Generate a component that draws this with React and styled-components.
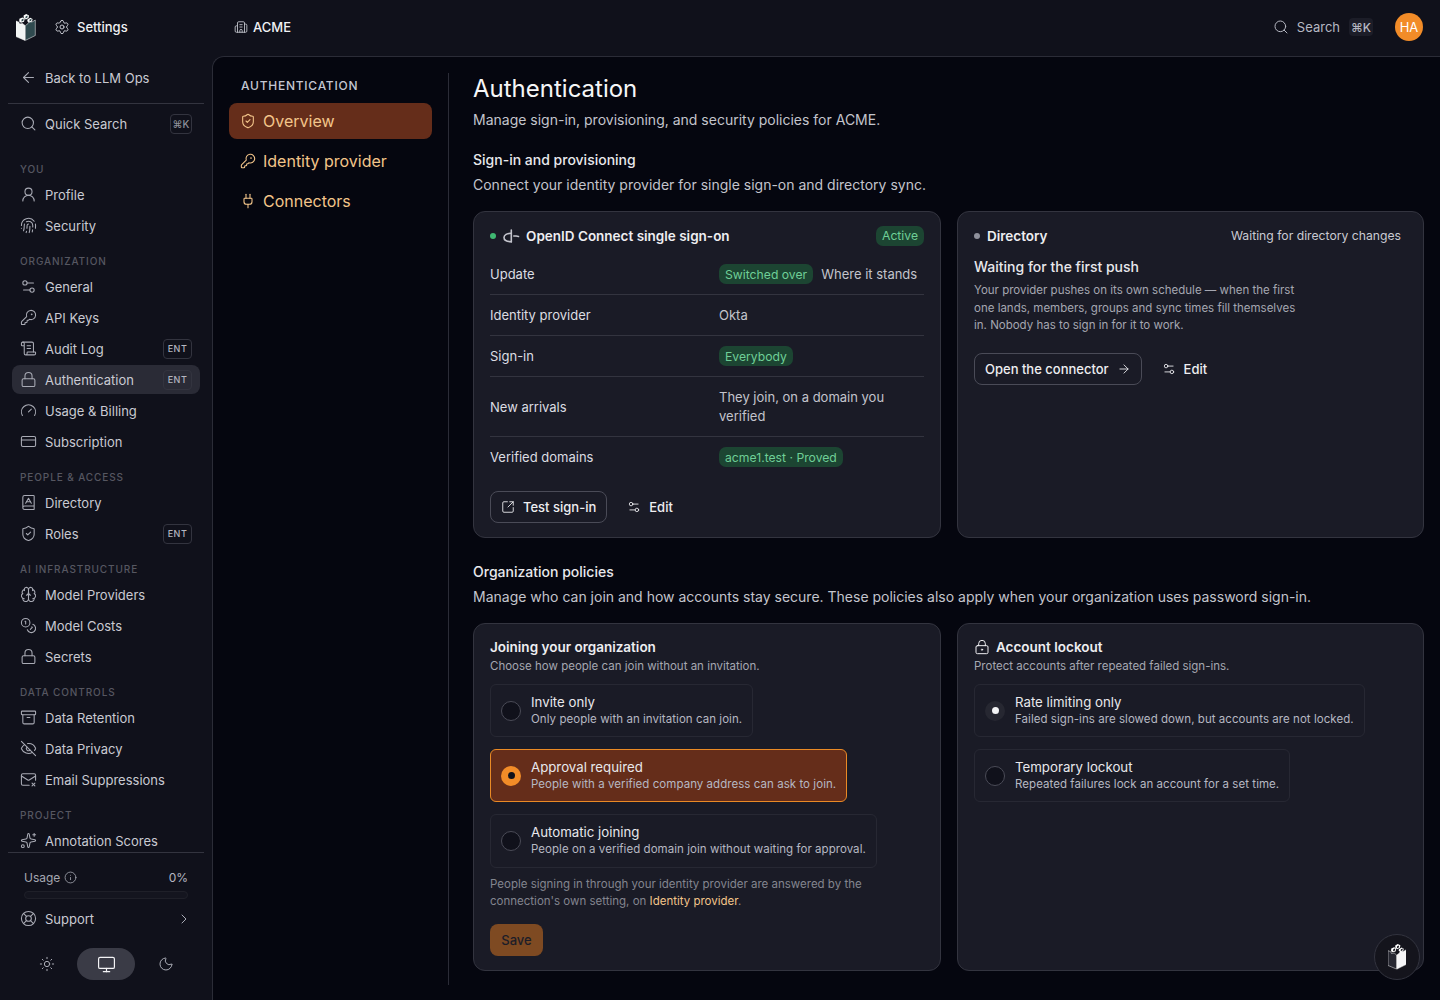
import React from 'react';
import styled, { createGlobalStyle } from 'styled-components';
import {
  Archive, ArrowLeft, ArrowRight, BookA, Brain, Building2, ChevronRight, Coins, CreditCard, EyeOff,
  Fingerprint, Gauge, Info, KeyRound, LifeBuoy, Lock, LockKeyhole, MailX, Monitor, Moon, Plug,
  ScrollText, Search, Settings, Settings2, ShieldCheck, Sparkles, SquareArrowOutUpRight, Sun, UserRound,
} from 'lucide-react';

const GlobalStyle = createGlobalStyle`
  html, body {
    margin: 0;
    height: 100%;
    background: #10111b;
    color: #f4f4f6;
    font-family: Inter, "Noto Sans", sans-serif;
    font-size: 14px;
    overflow: hidden;
  }
  * { box-sizing: border-box; }
`;

const Page = styled.div`
  display: flex;
  flex-direction: column;
  height: 100vh;
`;

const TopBar = styled.header`
  display: flex;
  align-items: center;
  height: 56px;
  flex: none;
  padding: 0 17px 2px 16px;
`;

const LogoSlot = styled.span`
  display: flex;
  width: 38px;
  flex: none;
`;

const TopTitle = styled.span`
  display: flex;
  align-items: center;
  gap: 7px;
  width: 180px;
  flex: none;
  font-size: 13px;
  font-weight: 500;
  color: #f1f1f4;
  svg { color: #c4c6ce; }
`;

const Org = styled(TopTitle)`
  gap: 5px;
  flex: 1;
`;

const TopSearch = styled.span`
  display: flex;
  align-items: center;
  gap: 8px;
  font-size: 13px;
  color: #b6b8c2;
  margin-right: 22px;
`;

const TopKbd = styled.kbd`
  display: flex;
  align-items: center;
  justify-content: center;
  width: 24px;
  height: 18px;
  margin-left: 1px;
  border-radius: 4px;
  background: #1c1d28;
  color: #b6b8c2;
  font: 500 12px Inter, sans-serif;
`;

const Avatar = styled.span`
  display: flex;
  align-items: center;
  justify-content: center;
  width: 28px;
  height: 28px;
  border-radius: 50%;
  background: #f28c28;
  color: #fff;
  font-size: 13px;
  font-weight: 400;
`;

const Body = styled.div`
  display: flex;
  flex: 1;
  min-height: 0;
`;

const Sidebar = styled.aside`
  display: flex;
  flex-direction: column;
  width: 212px;
  flex: none;
  min-height: 0;
`;

const BackArea = styled.div`
  margin: 0 8px;
  padding: 7px 4px 11px;
  border-bottom: 1px solid #33343f;
`;

const NavScroll = styled.nav`
  display: flex;
  flex-direction: column;
  flex: 1;
  min-height: 0;
  overflow: hidden;
  padding: 5px 12px 0;
`;

const NavItem = styled.a`
  display: flex;
  align-items: center;
  gap: 8px;
  height: 29px;
  flex: none;
  padding: 0 8px;
  border-radius: 8px;
  font-size: 13px;
  color: #c9cad2;
  background: ${(p) => (p.$active ? '#2a2b36' : 'transparent')};
  svg { color: #a9abb5; flex: none; }
`;

const ItemLabel = styled.span`
  flex: 1;
  white-space: nowrap;
`;

const QuickKbd = styled.kbd`
  display: flex;
  align-items: center;
  justify-content: center;
  width: 22px;
  height: 20px;
  border: 1px solid #33343f;
  border-radius: 4px;
  color: #8f919c;
  font: 500 10px Inter, sans-serif;
`;

const EntBadge = styled.span`
  display: flex;
  align-items: center;
  justify-content: center;
  width: 29px;
  height: 20px;
  border: 1px solid #33343f;
  border-radius: 4px;
  color: #b4b6c0;
  font-size: 9px;
  font-weight: 500;
  letter-spacing: 0.5px;
`;

const NavGroups = styled.div`
  display: flex;
  flex-direction: column;
  gap: 15px;
  margin-top: 25px;
`;

const NavGroup = styled.div`
  display: flex;
  flex-direction: column;
  gap: 2px;
`;

const GroupLabel = styled.div`
  height: 13px;
  margin-bottom: 2px;
  padding-left: 8px;
  font-size: 10px;
  line-height: 13px;
  font-weight: 500;
  letter-spacing: 0.9px;
  color: #565761;
`;

const SideFoot = styled.div`
  flex: none;
  margin: 0 8px;
  padding: 15px 4px 20px;
  border-top: 1px solid #33343f;
`;

const UsageRow = styled.div`
  display: flex;
  align-items: center;
  gap: 4px;
  padding: 0 12px;
  height: 18px;
  font-size: 12px;
  color: #a5a7b1;
  svg { color: #a5a7b1; }
`;

const UsagePct = styled.span`
  margin-left: auto;
  color: #b6b8c2;
`;

const UsageTrack = styled.div`
  height: 8px;
  margin: 5px 12px 5px;
  border: 1px solid #1f2029;
  border-radius: 4px;
  background: #14151f;
`;

const ThemeSwitch = styled.div`
  display: grid;
  grid-template-columns: 1fr 58px 1fr;
  align-items: center;
  justify-items: center;
  margin-top: 15px;
  padding: 0 4px;
`;

const ThemeOption = styled.span`
  display: flex;
  align-items: center;
  justify-content: center;
  width: 58px;
  height: 32px;
  border-radius: 16px;
  background: ${(p) => (p.$active ? '#3a3b46' : 'transparent')};
  color: ${(p) => (p.$active ? '#f4f4f6' : '#a9abb5')};
`;

const Main = styled.main`
  display: flex;
  flex: 1;
  min-width: 0;
  padding: 16px 16px 15px 0;
  background: #05060f;
  border-top: 1px solid #2b2c37;
  border-left: 1px solid #2b2c37;
  border-top-left-radius: 12px;
`;

const SubNav = styled.div`
  display: flex;
  flex-direction: column;
  gap: 4px;
  width: 236px;
  flex: none;
  padding: 0 16px;
  border-right: 1px solid #2b2c37;
`;

const SubHead = styled.div`
  height: 26px;
  padding: 5px 12px 0;
  font-size: 12px;
  font-weight: 500;
  letter-spacing: 0.75px;
  color: #c3c6d2;
`;

const SubItem = styled.a`
  display: flex;
  align-items: center;
  gap: 7px;
  height: 36px;
  padding: 0 11px;
  border-radius: 8px;
  font-size: 16px;
  color: #f3c58a;
  background: ${(p) => (p.$active ? '#652d1a' : 'transparent')};
`;

const Content = styled.div`
  flex: 1;
  min-width: 0;
  margin-left: 24px;
`;

const PageTitle = styled.h1`
  margin: 0;
  font-size: 24px;
  line-height: 32px;
  font-weight: 400;
  color: #f6f6f8;
`;

const Lead = styled.p`
  margin: 5px 0 0;
  font-size: 14px;
  line-height: 20px;
  color: #c3c4cc;
`;

const SectionTitle = styled.h2`
  margin: ${(p) => p.$top}px 0 0;
  font-size: 14px;
  line-height: 20px;
  font-weight: 500;
  color: #e8e8ec;
`;

const SectionText = styled(Lead)`
  margin-top: 5px;
`;

const CardGrid = styled.div`
  display: grid;
  grid-template-columns: 468px 467px;
  gap: 16px;
  margin-top: 16px;
  height: ${(p) => p.$h}px;
`;

const Card = styled.section`
  display: flex;
  flex-direction: column;
  align-items: flex-start;
  padding: 14px 16px;
  background: #1a1b26;
  border: 1px solid #33343f;
  border-radius: 12px;
`;

const CardHead = styled.div`
  display: flex;
  align-items: center;
  width: 100%;
  height: 20px;
  gap: 6px;
  font-size: 13.5px;
  font-weight: 600;
  color: #eeeef1;
`;

const Dot = styled.span`
  width: 6px;
  height: 6px;
  border-radius: 50%;
  margin-right: ${(p) => p.$gap}px;
  background: ${(p) => p.$color};
`;

const Pill = styled.span`
  display: inline-flex;
  align-items: center;
  height: 20px;
  padding: 0 6px;
  border-radius: 7px;
  background: #1c4532;
  color: #6fcf97;
  font-size: 12.2px;
  font-weight: 400;
  white-space: nowrap;
`;

const HeadPill = styled(Pill)`
  margin-left: auto;
  margin-top: -1px;
`;

const HeadNote = styled.span`
  margin-left: auto;
  margin-right: 6px;
  margin-top: -1px;
  font-size: 12.2px;
  font-weight: 400;
  color: #c9cad2;
`;

const Rows = styled.div`
  width: 100%;
  margin-top: 8px;
`;

const Row = styled.div`
  display: grid;
  grid-template-columns: 229px 1fr;
  align-items: center;
  min-height: ${(p) => (p.$tall ? 60 : 41)}px;
  padding: 10px 0;
  border-bottom: 1px solid ${(p) => (p.$last ? 'transparent' : '#33343f')};
`;

const RowLabel = styled.span`
  color: #dcdde2;
  font-size: 13px;
`;

const RowValue = styled.span`
  display: flex;
  align-items: center;
  gap: 8px;
  font-size: 13px;
  line-height: 19px;
  color: #c3c4cc;
`;

const Actions = styled.div`
  display: flex;
  align-items: center;
  gap: 4px;
  margin-top: ${(p) => p.$top}px;
`;

const OutlineButton = styled.button`
  display: flex;
  align-items: center;
  gap: 8px;
  height: 32px;
  padding: 0 10px;
  border: 1px solid #4a4b57;
  border-radius: 8px;
  background: transparent;
  color: #eeeef1;
  font: 500 13px Inter, sans-serif;
`;

const GhostButton = styled(OutlineButton)`
  border-color: transparent;
  padding: 0 10px 0 15px;
`;

const SubTitle = styled.div`
  margin-top: 11px;
  font-size: 14px;
  line-height: 20px;
  font-weight: 500;
  color: #e8e8ec;
`;

const Para = styled.p`
  width: 325px;
  margin: 5px 0 0;
  font-size: 11.5px;
  line-height: 17.5px;
  color: #a5a7b1;
`;

const CardTitle = styled.div`
  display: flex;
  align-items: center;
  gap: 6px;
  font-size: 13.5px;
  line-height: 18px;
  font-weight: 600;
  color: #eeeef1;
`;

const CardHint = styled.div`
  margin-top: 2px;
  font-size: 11.5px;
  line-height: 16px;
  color: #a5a7b1;
`;

const Options = styled.div`
  display: flex;
  flex-direction: column;
  align-items: flex-start;
  gap: 12px;
  margin-top: 10px;
`;

const Option = styled.div`
  display: flex;
  align-items: center;
  gap: 10px;
  min-height: ${(p) => (p.$tall ? 54 : 53)}px;
  padding: 0 10px;
  border: 1px solid ${(p) => (p.$on ? '#ea8a25' : '#272833')};
  border-radius: 6px;
  background: ${(p) => (p.$on ? '#652d1a' : 'transparent')};
`;

const Radio = styled.span`
  display: flex;
  align-items: center;
  justify-content: center;
  width: 20px;
  height: 20px;
  flex: none;
  border-radius: 50%;
  border: ${(p) => (p.$kind ? 'none' : '1px solid #4a4b57')};
  background: ${(p) => (p.$kind === 'orange' ? '#f28c28' : p.$kind === 'white' ? '#262731' : '#10111b')};
  &::after {
    content: '';
    display: ${(p) => (p.$kind ? 'block' : 'none')};
    width: 7px;
    height: 7px;
    border-radius: 50%;
    background: ${(p) => (p.$kind === 'orange' ? '#10111b' : '#f4f4f6')};
  }
`;

const OptionName = styled.div`
  font-size: 13.25px;
  line-height: 17px;
  color: #e8e8ec;
`;

const OptionText = styled.div`
  font-size: 11.5px;
  line-height: 17px;
  letter-spacing: 0.05px;
  color: #b6b8c2;
  white-space: nowrap;
`;

const Note = styled.p`
  width: 400px;
  margin: 8px 0 0;
  font-size: 11.5px;
  line-height: 17px;
  color: #83858f;
`;

const NoteLink = styled.span`
  color: #f3c58a;
`;

const SaveButton = styled.button`
  width: 53px;
  height: 32px;
  margin-top: 14px;
  border: none;
  border-radius: 8px;
  background: #7e4a22;
  color: #1c1d28;
  font: 500 13px Inter, sans-serif;
`;

const FloatButton = styled.button`
  position: fixed;
  right: 20px;
  bottom: 20px;
  display: flex;
  align-items: center;
  justify-content: center;
  width: 46px;
  height: 46px;
  padding: 0;
  border: 1px solid #33343f;
  border-radius: 50%;
  background: #14141c;
`;

// castle tower mark, the top bar one has a dark right face
const Logo = ({ scale = 1, left, right, detail }) => (
  <svg width={19.5 * scale} height={27 * scale} viewBox="0 0 19.5 27">
    <polygon points="0,7 3,8.2 3.6,10 6.5,9.5 9,11.5 9,26.4 0,22.6" fill={left} stroke="#fff" strokeWidth="0.5" />
    <polygon points="9.4,11.5 12,9.6 13,7.6 16,8 19.3,6 19.3,21.5 9.4,26.4" fill={right} stroke="#fff" strokeWidth="0.5" />
    <polygon points="3.4,4.8 6.4,3.4 8.8,4.6 8,7.8 5,8.8 3.2,7.6" fill="#fff" />
    <polygon points="7.6,1.6 10.2,0 13,1.4 12.6,4 9.8,5.4 7.8,4" fill="#fff" />
    <polygon points="11.6,5.2 14.4,3.8 16.6,5 16,7.4 13.2,8.4 11.2,7.2" fill="#fff" />
    <polygon points="5.6,5.4 7.6,4.6 7.4,6.8 5.4,7.6" fill={detail} />
    <polygon points="9.6,2.4 11.6,1.6 11.4,3.6 9.4,4.4" fill={detail} />
    <polygon points="13.6,5.6 15.6,4.8 15.2,6.8 13.4,7.4" fill={detail} />
  </svg>
);

const OpenIdIcon = () => (
  <svg width="17" height="16" viewBox="0 0 17 16" fill="none" stroke="#c3c4cc" strokeWidth="1.6" strokeLinecap="round">
    <path d="M8.3 5.3C4 5.3 1 7 1 9.5s3 4.2 7.3 4.2" />
    <path d="M8.3 2v12" />
    <path d="M10.8 8h2.4l2.3.5" />
  </svg>
);

const sections = [
  { label: 'YOU', items: [['Profile', UserRound], ['Security', Fingerprint]] },
  {
    label: 'ORGANIZATION',
    items: [
      ['General', Settings2],
      ['API Keys', KeyRound],
      ['Audit Log', ScrollText, true],
      ['Authentication', Lock, true, true],
      ['Usage & Billing', Gauge],
      ['Subscription', CreditCard],
    ],
  },
  { label: 'PEOPLE & ACCESS', items: [['Directory', BookA], ['Roles', ShieldCheck, true]] },
  { label: 'AI INFRASTRUCTURE', items: [['Model Providers', Brain], ['Model Costs', Coins], ['Secrets', Lock]] },
  { label: 'DATA CONTROLS', items: [['Data Retention', Archive], ['Data Privacy', EyeOff], ['Email Suppressions', MailX]] },
  { label: 'PROJECT', items: [['Annotation Scores', Sparkles]] },
];

const joinOptions = [
  { name: 'Invite only', text: 'Only people with an invitation can join.' },
  { name: 'Approval required', text: 'People with a verified company address can ask to join.', on: true, radio: 'orange' },
  { name: 'Automatic joining', text: 'People on a verified domain join without waiting for approval.', tall: true },
];

const lockOptions = [
  { name: 'Rate limiting only', text: 'Failed sign-ins are slowed down, but accounts are not locked.', radio: 'white' },
  { name: 'Temporary lockout', text: 'Repeated failures lock an account for a set time.' },
];

const OptionList = ({ options }) => (
  <Options>
    {options.map((o) => (
      <Option key={o.name} $on={o.on} $tall={o.tall}>
        <Radio $kind={o.radio} />
        <div>
          <OptionName>{o.name}</OptionName>
          <OptionText>{o.text}</OptionText>
        </div>
      </Option>
    ))}
  </Options>
);

export default function App() {
  return (
    <Page>
      <GlobalStyle />
      <TopBar>
        <LogoSlot><Logo left="#f2f5f5" right="#2f4a4f" detail="#2f4a4f" /></LogoSlot>
        <TopTitle><Settings size={16} strokeWidth={1.5} />Settings</TopTitle>
        <Org><Building2 size={14} strokeWidth={1.5} />ACME</Org>
        <TopSearch>
          <Search size={16} strokeWidth={1.5} />
          Search
          <TopKbd>⌘K</TopKbd>
        </TopSearch>
        <Avatar>HA</Avatar>
      </TopBar>

      <Body>
        <Sidebar>
          <BackArea>
            <NavItem><ArrowLeft size={17} strokeWidth={1.5} /><ItemLabel>Back to LLM Ops</ItemLabel></NavItem>
          </BackArea>
          <NavScroll>
            <NavItem>
              <Search size={17} strokeWidth={1.5} />
              <ItemLabel>Quick Search</ItemLabel>
              <QuickKbd>⌘K</QuickKbd>
            </NavItem>
            <NavGroups>
              {sections.map((s) => (
                <NavGroup key={s.label}>
                  <GroupLabel>{s.label}</GroupLabel>
                  {s.items.map(([name, Icon, ent, active]) => (
                    <NavItem key={name} $active={active}>
                      <Icon size={17} strokeWidth={1.5} />
                      <ItemLabel>{name}</ItemLabel>
                      {ent && <EntBadge>ENT</EntBadge>}
                    </NavItem>
                  ))}
                </NavGroup>
              ))}
            </NavGroups>
          </NavScroll>
          <SideFoot>
            <UsageRow>Usage <Info size={13} strokeWidth={1.5} /><UsagePct>0%</UsagePct></UsageRow>
            <UsageTrack />
            <NavItem>
              <LifeBuoy size={17} strokeWidth={1.5} />
              <ItemLabel>Support</ItemLabel>
              <ChevronRight size={16} strokeWidth={1.5} />
            </NavItem>
            <ThemeSwitch>
              <ThemeOption><Sun size={16} strokeWidth={1.5} /></ThemeOption>
              <ThemeOption $active><Monitor size={19} strokeWidth={1.5} /></ThemeOption>
              <ThemeOption><Moon size={16} strokeWidth={1.5} /></ThemeOption>
            </ThemeSwitch>
          </SideFoot>
        </Sidebar>

        <Main>
          <SubNav>
            <SubHead>AUTHENTICATION</SubHead>
            <SubItem $active><ShieldCheck size={16} strokeWidth={1.6} />Overview</SubItem>
            <SubItem><KeyRound size={16} strokeWidth={1.6} />Identity provider</SubItem>
            <SubItem><Plug size={16} strokeWidth={1.6} />Connectors</SubItem>
          </SubNav>

          <Content>
            <PageTitle>Authentication</PageTitle>
            <Lead>Manage sign-in, provisioning, and security policies for ACME.</Lead>

            <SectionTitle $top={20}>Sign-in and provisioning</SectionTitle>
            <SectionText>Connect your identity provider for single sign-on and directory sync.</SectionText>
            <CardGrid $h={327}>
              <Card>
                <CardHead>
                  <Dot $color="#3fb872" $gap={1} />
                  <OpenIdIcon />
                  OpenID Connect single sign-on
                  <HeadPill>Active</HeadPill>
                </CardHead>
                <Rows>
                  <Row>
                    <RowLabel>Update</RowLabel>
                    <RowValue><Pill>Switched over</Pill>Where it stands</RowValue>
                  </Row>
                  <Row>
                    <RowLabel>Identity provider</RowLabel>
                    <RowValue>Okta</RowValue>
                  </Row>
                  <Row>
                    <RowLabel>Sign-in</RowLabel>
                    <RowValue><Pill>Everybody</Pill></RowValue>
                  </Row>
                  <Row $tall>
                    <RowLabel>New arrivals</RowLabel>
                    <RowValue>They join, on a domain you verified</RowValue>
                  </Row>
                  <Row $last>
                    <RowLabel>Verified domains</RowLabel>
                    <RowValue><Pill>acme1.test · Proved</Pill></RowValue>
                  </Row>
                </Rows>
                <Actions $top={13}>
                  <OutlineButton><SquareArrowOutUpRight size={14} strokeWidth={1.5} />Test sign-in</OutlineButton>
                  <GhostButton><Settings2 size={14} strokeWidth={1.5} />Edit</GhostButton>
                </Actions>
              </Card>

              <Card>
                <CardHead>
                  <Dot $color="#8f919c" $gap={1} />
                  Directory
                  <HeadNote>Waiting for directory changes</HeadNote>
                </CardHead>
                <SubTitle>Waiting for the first push</SubTitle>
                <Para>
                  Your provider pushes on its own schedule — when the first one lands, members, groups and sync
                  times fill themselves in. Nobody has to sign in for it to work.
                </Para>
                <Actions $top={18}>
                  <OutlineButton>Open the connector<ArrowRight size={14} strokeWidth={1.5} /></OutlineButton>
                  <GhostButton><Settings2 size={14} strokeWidth={1.5} />Edit</GhostButton>
                </Actions>
              </Card>
            </CardGrid>

            <SectionTitle $top={24}>Organization policies</SectionTitle>
            <SectionText>
              Manage who can join and how accounts stay secure. These policies also apply when your organization
              uses password sign-in.
            </SectionText>
            <CardGrid $h={348}>
              <Card>
                <CardTitle>Joining your organization</CardTitle>
                <CardHint>Choose how people can join without an invitation.</CardHint>
                <OptionList options={joinOptions} />
                <Note>
                  People signing in through your identity provider are answered by the connection's own setting, on{' '}
                  <NoteLink>Identity provider</NoteLink>.
                </Note>
                <SaveButton>Save</SaveButton>
              </Card>
              <Card>
                <CardTitle><LockKeyhole size={16} strokeWidth={1.5} />Account lockout</CardTitle>
                <CardHint>Protect accounts after repeated failed sign-ins.</CardHint>
                <OptionList options={lockOptions} />
              </Card>
            </CardGrid>
          </Content>
        </Main>
      </Body>

      <FloatButton><Logo scale={0.95} left="#262731" right="#f4f4f6" detail="#14141c" /></FloatButton>
    </Page>
  );
}
